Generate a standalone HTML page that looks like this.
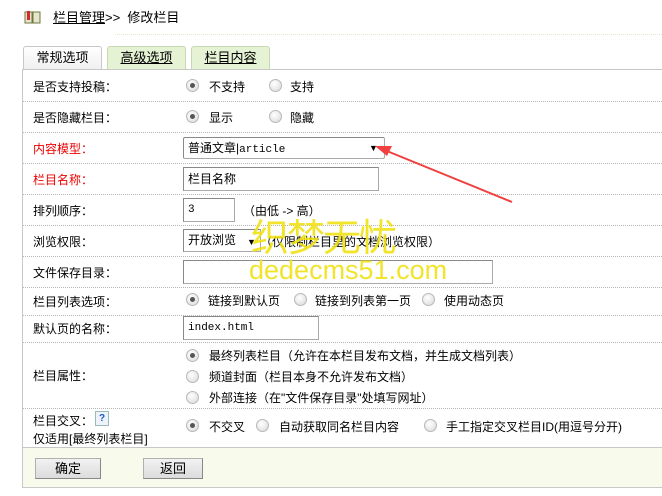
<!DOCTYPE html>
<html><head><meta charset="utf-8"><style>
body{margin:0;width:662px;height:496px;background:#fff;position:relative;overflow:hidden;font-family:"Liberation Sans","Noto Sans CJK SC","WenQuanYi Zen Hei",sans-serif;font-size:12px;color:#000}
.a{position:absolute;white-space:nowrap;line-height:14px}
.sep{position:absolute;left:23px;width:639px;height:0;border-top:1px dotted #b5b5b5}
.r{position:absolute;width:11px;height:11px;border-radius:50%;border:1px solid #b8b8b8;background:radial-gradient(circle at 40% 35%,#fff,#d8d8d8)}
.r.on::after{content:"";position:absolute;left:3px;top:3px;width:5px;height:5px;border-radius:50%;background:#555}
.in{position:absolute;border:1px solid #a9a9a9;border-top-color:#888;border-left-color:#888;background:#fff;box-sizing:border-box;padding-left:4px}
.tab{position:absolute;top:46px;height:23px;box-sizing:border-box;border:1px solid #c8d8b0;border-bottom:none;border-radius:3px 3px 0 0;text-align:center;line-height:22px;font-size:13px}
.btn{position:absolute;top:458px;height:21px;box-sizing:border-box;border:1px solid #b0b0b0;border-right-color:#888;border-bottom-color:#888;background:linear-gradient(#f2f2f2,#dcdcdc);text-align:center;line-height:19px;font-size:13px}
</style></head><body>
<svg class="a" style="left:24px;top:10px" width="17" height="14" viewBox="0 0 17 14"><path d="M1 2h7v11H1z" fill="#e8e4d0" stroke="#6b7a3a"/><path d="M9 2h7v11H9z" fill="#e8e4d0" stroke="#6b7a3a"/><rect x="3" y="1" width="3" height="9" fill="#d42a2a"/></svg>
<div class="a" style="left:53px;top:11px;font-size:13px"><span style="text-decoration:underline">栏目管理</span>&gt;&gt;&nbsp;&nbsp;修改栏目</div>
<div style="position:absolute;left:115px;top:34px;width:547px;border-top:1px dotted #e6e6d0"></div>

<div class="tab" style="left:23px;width:79px;background:linear-gradient(#fff,#f0f0f0);border-color:#c8c8c8">常规选项</div>
<div class="tab" style="left:107px;width:79px;background:#e5f2d3"><u>高级选项</u></div>
<div class="tab" style="left:191px;width:79px;background:#e5f2d3"><u>栏目内容</u></div>
<div style="position:absolute;left:22px;top:69px;width:640px;height:417px;border-left:1px solid #c8c8c8;border-top:1px solid #c8c8c8;border-bottom:1px solid #c8c8c8"></div>
<div style="position:absolute;left:23px;top:447px;width:639px;height:39px;background:#f8faec;border-top:1px solid #c8c8c8"></div>

<div class="sep" style="top:101px"></div><div class="sep" style="top:132px"></div><div class="sep" style="top:163px"></div><div class="sep" style="top:194px"></div><div class="sep" style="top:225px"></div><div class="sep" style="top:256px"></div><div class="sep" style="top:287px"></div><div class="sep" style="top:315px"></div><div class="sep" style="top:342px"></div><div class="sep" style="top:408px"></div>

<div class="a" style="left:33px;top:80px">是否支持投稿：</div>
<div class="r on" style="left:186px;top:79px"></div><div class="a" style="left:209px;top:80px">不支持</div>
<div class="r" style="left:269px;top:79px"></div><div class="a" style="left:290px;top:80px">支持</div>

<div class="a" style="left:33px;top:111px">是否隐藏栏目：</div>
<div class="r on" style="left:186px;top:110px"></div><div class="a" style="left:209px;top:111px">显示</div>
<div class="r" style="left:269px;top:110px"></div><div class="a" style="left:290px;top:111px">隐藏</div>

<div class="a" style="left:33px;top:142px;color:#e00">内容模型：</div>
<div class="in" style="left:183px;top:137px;width:202px;height:22px;border-radius:2px;line-height:20px">普通文章|<span style="font-family:'Liberation Mono',monospace;font-size:11px">article</span></div>
<div class="a" style="left:369px;top:141px;font-size:9px">▼</div>

<div class="a" style="left:33px;top:173px;color:#e00">栏目名称：</div>
<div class="in" style="left:183px;top:167px;width:196px;height:24px;line-height:22px">栏目名称</div>

<div class="a" style="left:33px;top:204px">排列顺序：</div>
<div class="in" style="left:183px;top:198px;width:52px;height:24px;line-height:22px;font-family:'Liberation Mono',monospace;font-size:11px">3</div>
<div class="a" style="left:243px;top:204px">（由低 -&gt; 高）</div>

<div class="a" style="left:33px;top:235px">浏览权限：</div>
<div class="in" style="left:183px;top:229px;width:78px;height:23px;line-height:21px">开放浏览</div>
<div class="a" style="left:247px;top:235px;font-size:9px">▼</div>
<div class="a" style="left:260px;top:235px">（仅限制栏目里的文档浏览权限）</div>

<div class="a" style="left:33px;top:266px">文件保存目录：</div>
<div class="in" style="left:183px;top:260px;width:310px;height:24px"></div>

<div class="a" style="left:33px;top:295px">栏目列表选项：</div>
<div class="r on" style="left:186px;top:293px"></div><div class="a" style="left:208px;top:294px">链接到默认页</div>
<div class="r" style="left:294px;top:293px"></div><div class="a" style="left:315px;top:294px">链接到列表第一页</div>
<div class="r" style="left:422px;top:293px"></div><div class="a" style="left:444px;top:294px">使用动态页</div>

<div class="a" style="left:33px;top:322px">默认页的名称：</div>
<div class="in" style="left:183px;top:316px;width:136px;height:24px;line-height:22px;font-family:'Liberation Mono',monospace;font-size:11px">index.html</div>

<div class="a" style="left:33px;top:369px">栏目属性：</div>
<div class="r on" style="left:186px;top:349px"></div><div class="a" style="left:209px;top:349px">最终列表栏目（允许在本栏目发布文档，并生成文档列表）</div>
<div class="r" style="left:186px;top:370px"></div><div class="a" style="left:209px;top:370px">频道封面（栏目本身不允许发布文档）</div>
<div class="r" style="left:186px;top:391px"></div><div class="a" style="left:209px;top:391px">外部连接（在"文件保存目录"处填写网址）</div>

<div class="a" style="left:33px;top:414px">栏目交叉：</div>
<div class="a" style="left:95px;top:411px;width:12px;height:13px;background:#eef3fb;border:1px solid #9bb;font-size:10px;line-height:13px;text-align:center;color:#1a55c0;font-weight:bold">?</div>
<div class="a" style="left:33px;top:432px">仅适用[最终列表栏目]</div>
<div class="r on" style="left:186px;top:419px"></div><div class="a" style="left:209px;top:420px">不交叉</div>
<div class="r" style="left:256px;top:419px"></div><div class="a" style="left:279px;top:420px">自动获取同名栏目内容</div>
<div class="r" style="left:424px;top:419px"></div><div class="a" style="left:446px;top:420px">手工指定交叉栏目ID(用逗号分开)</div>

<div class="btn" style="left:35px;width:66px">确定</div>
<div class="btn" style="left:143px;width:60px">返回</div>

<div class="a" style="left:251px;top:218px;font-size:38px;line-height:42px;color:rgba(240,225,20,0.9);letter-spacing:-2px">织梦无忧</div>
<div class="a" style="left:249px;top:255px;font-size:27px;line-height:30px;color:rgba(240,225,20,0.9)">dedecms51.com</div>

<svg style="position:absolute;left:370px;top:140px" width="150" height="70"><path d="M12 9 L142 62" stroke="#f04040" stroke-width="2"/><path d="M5 6 L22 6 L17 16 Z" fill="#f04040"/></svg>
</body></html>
